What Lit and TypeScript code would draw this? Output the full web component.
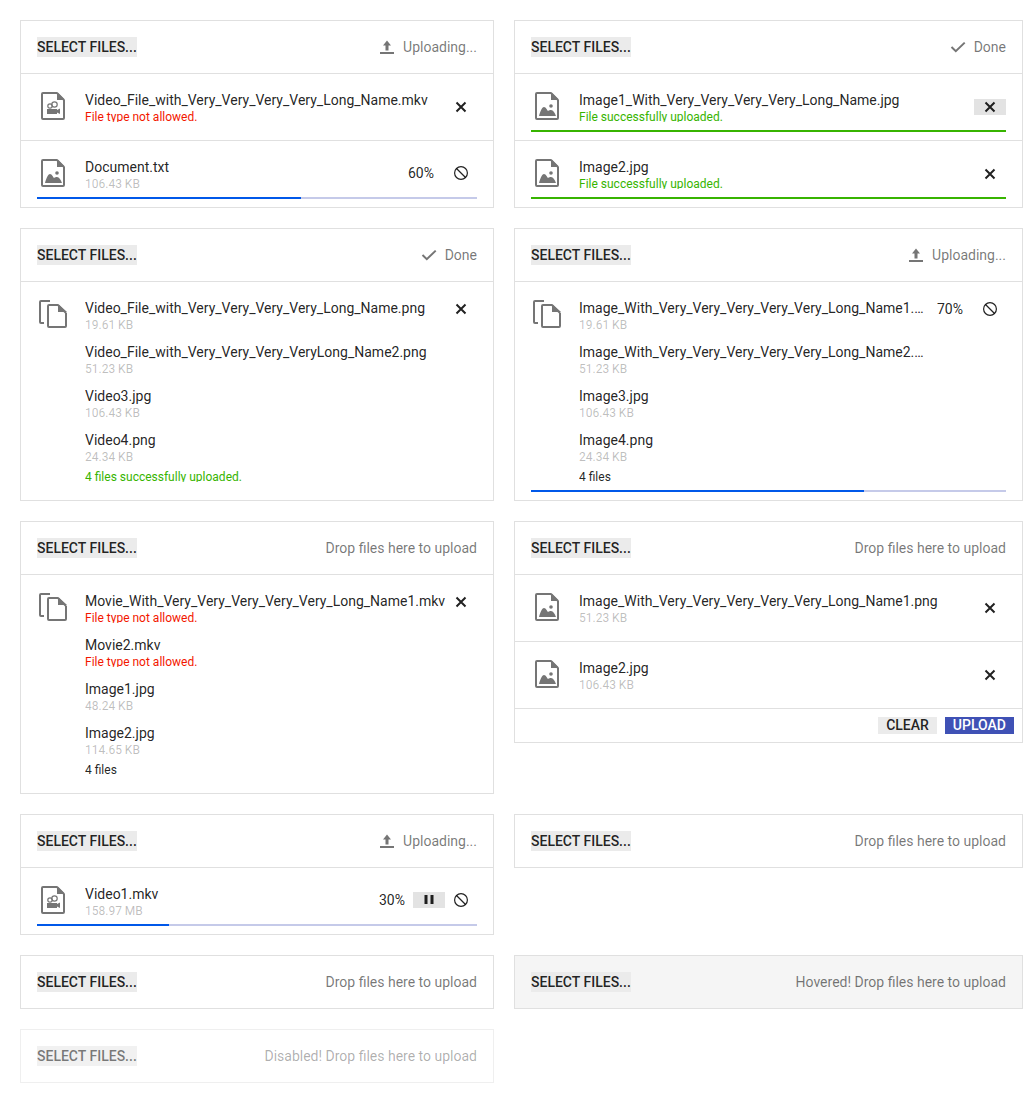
import { LitElement, html, css, svg } from "lit";
import { customElement, property } from "lit/decorators.js";

type Kind = "image" | "video" | "multi";

const fold = svg`<path d="M20 2 V10 H28 Z" fill="currentColor" stroke="none"/>`;
const docIcon = (inner: unknown) => html`<svg class="file-icon" viewBox="0 0 32 32" width="32" height="32" fill="none" stroke="currentColor" stroke-width="2">
  <path d="M20 3 H6 a1 1 0 0 0 -1 1 V28 a1 1 0 0 0 1 1 H26 a1 1 0 0 0 1 -1 V10"/>
  <path d="M20 3 L27 10"/>${fold}${inner}
</svg>`;
const imageInner = svg`<circle cx="20" cy="16" r="1.8" fill="currentColor" stroke="none"/>
  <path d="M8 26 C9 22 11 17 13 17 C15 17 16 20 17 21 C18 20 19 20 20 20 C22 20 24 23 25 26 Z" fill="currentColor" stroke="none"/>`;
const videoInner = svg`<circle cx="13" cy="16" r="2.2" stroke-width="1.2"/>
  <circle cx="17.5" cy="14.5" r="2.7" stroke-width="1.2"/>
  <path d="M10 19 H20 V20 L23 18.5 V24 L20 22.5 V24 H10 Z" fill="currentColor" stroke="none"/>`;
const multiIcon = html`<svg class="file-icon" viewBox="0 0 32 32" width="32" height="32" fill="none" stroke="currentColor" stroke-width="2">
  <path d="M13 3 H4 a1 1 0 0 0 -1 1 V24 a1 1 0 0 0 1 1 H7"/>
  <path d="M21 7 H12 a1 1 0 0 0 -1 1 V28 a1 1 0 0 0 1 1 H28 a1 1 0 0 0 1 -1 V15"/>
  <path d="M21 7 L29 15"/><path d="M21 6 V14 H30 Z" fill="currentColor" stroke="none"/>
</svg>`;
const fileIcon = (k: Kind) => (k === "multi" ? multiIcon : docIcon(k === "video" ? videoInner : imageInner));

const uploadIcon = html`<svg viewBox="0 0 16 16" width="16" height="16" fill="currentColor"><path d="M1 13 H15 V15 H1 Z"/><path d="M8 1.5 L12 6.5 H9.5 V11.5 H6.5 V6.5 H4 Z"/></svg>`;
const checkIcon = html`<svg viewBox="0 0 16 16" width="16" height="16" fill="none" stroke="currentColor" stroke-width="2"><path d="M1.5 8 L5.8 12.2 L14.7 3.6"/></svg>`;
const xIcon = html`<svg viewBox="0 0 16 16" width="16" height="16" fill="none" stroke="currentColor" stroke-width="2"><path d="M3.5 3.5 L12.5 12.5 M12.5 3.5 L3.5 12.5"/></svg>`;
const cancelIcon = html`<svg viewBox="0 0 16 16" width="16" height="16" fill="none" stroke="currentColor" stroke-width="1.2"><circle cx="8" cy="8" r="6.4"/><path d="M3.5 3.5 L12.5 12.5"/></svg>`;
const pauseIcon = html`<svg viewBox="0 0 16 16" width="16" height="16" fill="currentColor"><path d="M3.5 3 H6.5 V12 H3.5 Z M9.5 3 H12.5 V12 H9.5 Z"/></svg>`;

interface Row { name: string; size?: string; err?: string; ok?: string; }
interface Item {
  kind: Kind;
  rows: Row[];
  summary?: string;
  summaryOk?: boolean;
  pct?: number;
  bar?: "ok";
  pause?: boolean;
  action?: "x" | "xhover" | "cancel";
}
interface Card {
  status?: "up" | "done" | "drop" | "hover" | "disabled";
  items?: Item[];
  actions?: boolean;
}

const ERR = "File type not allowed.";
const OK = "File successfully uploaded.";

const cards: Card[] = [
  { status: "up", items: [
    { kind: "video", rows: [{ name: "Video_File_with_Very_Very_Very_Very_Long_Name.mkv", err: ERR }], action: "x" },
    { kind: "image", rows: [{ name: "Document.txt", size: "106.43 KB" }], pct: 60, action: "cancel" },
  ] },
  { status: "done", items: [
    { kind: "image", rows: [{ name: "Image1_With_Very_Very_Very_Very_Long_Name.jpg", ok: OK }], bar: "ok", action: "xhover" },
    { kind: "image", rows: [{ name: "Image2.jpg", ok: OK }], bar: "ok", action: "x" },
  ] },
  { status: "done", items: [
    { kind: "multi", action: "x", summary: "4 files successfully uploaded.", summaryOk: true, rows: [
      { name: "Video_File_with_Very_Very_Very_Very_Long_Name.png", size: "19.61 KB" },
      { name: "Video_File_with_Very_Very_Very_VeryLong_Name2.png", size: "51.23 KB" },
      { name: "Video3.jpg", size: "106.43 KB" },
      { name: "Video4.png", size: "24.34 KB" },
    ] },
  ] },
  { status: "up", items: [
    { kind: "multi", action: "cancel", pct: 70, summary: "4 files", rows: [
      { name: "Image_With_Very_Very_Very_Very_Very_Long_Name1.png", size: "19.61 KB" },
      { name: "Image_With_Very_Very_Very_Very_Very_Long_Name2.png", size: "51.23 KB" },
      { name: "Image3.jpg", size: "106.43 KB" },
      { name: "Image4.png", size: "24.34 KB" },
    ] },
  ] },
  { status: "drop", items: [
    { kind: "multi", action: "x", summary: "4 files", rows: [
      { name: "Movie_With_Very_Very_Very_Very_Very_Long_Name1.mkv", err: ERR },
      { name: "Movie2.mkv", err: ERR },
      { name: "Image1.jpg", size: "48.24 KB" },
      { name: "Image2.jpg", size: "114.65 KB" },
    ] },
  ] },
  { status: "drop", actions: true, items: [
    { kind: "image", rows: [{ name: "Image_With_Very_Very_Very_Very_Very_Long_Name1.png", size: "51.23 KB" }], action: "x" },
    { kind: "image", rows: [{ name: "Image2.jpg", size: "106.43 KB" }], action: "x" },
  ] },
  { status: "up", items: [
    { kind: "video", rows: [{ name: "Video1.mkv", size: "158.97 MB" }], pct: 30, pause: true, action: "cancel" },
  ] },
  { status: "drop" },
  { status: "drop" },
  { status: "hover" },
  { status: "disabled" },
];

@customElement("app-root")
export class AppRoot extends LitElement {
  @property({ type: Array }) cards = cards;

  static styles = css`
    :host {
      display: block;
      font-family: Roboto, "Liberation Sans", sans-serif;
      font-size: 14px;
      color: rgba(0, 0, 0, 0.87);
    }
    .page {
      display: grid;
      grid-template-columns: 474px 509px;
      column-gap: 20px;
      row-gap: 20px;
      padding: 20px 1px 20px 20px;
      align-items: start;
    }
    .card {
      border: 1px solid #e0e0e0;
      background: #fff;
    }
    .header {
      height: 52px;
      box-sizing: border-box;
      padding: 0 16px;
      display: flex;
      align-items: center;
      justify-content: space-between;
    }
    .card.hover .header { background: #f5f5f5; }
    .card.disabled { border-color: #efefef; }
    .card.disabled .select { color: rgba(0, 0, 0, 0.52); background: #f1f1f1; }
    .card.disabled .status { color: rgba(0, 0, 0, 0.32); }
    .select {
      font: 500 14px/20px Roboto, "Liberation Sans", sans-serif;
      background: #ebebeb;
      height: 20px;
      display: flex;
      align-items: center;
    }
    .status {
      display: flex;
      align-items: center;
      gap: 8px;
      color: rgba(0, 0, 0, 0.54);
      line-height: 20px;
    }
    .status svg { color: #757575; display: block; }
    .item {
      position: relative;
      border-top: 1px solid #e0e0e0;
      padding: 16px;
      min-height: 34px;
      display: flex;
      align-items: flex-start;
    }
    .file-icon { display: block; flex: none; color: #757575; margin-right: 16px; }
    .info {
      flex: 1;
      min-width: 0;
      padding-top: 2px;
    }
    .row + .row { margin-top: 14px; }
    .name {
      font-size: 14px;
      line-height: 17px;
      height: 17px;
      white-space: nowrap;
      overflow: hidden;
      text-overflow: ellipsis;
    }
    .sub {
      font-size: 12px;
      line-height: 16px;
      height: 13px;
      overflow: hidden;
      white-space: nowrap;
    }
    .size { color: rgba(0, 0, 0, 0.26); }
    .err { color: #f31700; }
    .ok { color: #37b400; }
    .summary {
      margin-top: 8px;
      margin-bottom: 2px;
      line-height: 14px;
      height: 12px;
    }
    .actions {
      flex: none;
      display: flex;
      align-items: center;
      margin-top: 9px;
      margin-left: -6px;
    }
    .item.progress .actions { margin-top: 8px; margin-left: 0; }
    .item.multi .actions { margin-top: 3px; }
    .pct { margin: 0 11px; line-height: 16px; }
    .pct.tight { margin-right: 8px; }
    .btn {
      width: 32px;
      height: 16px;
      display: flex;
      align-items: center;
      justify-content: center;
    }
    .btn.on { background: #e3e3e3; }
    .btn svg { display: block; }
    .track {
      position: absolute;
      left: 16px;
      right: 16px;
      bottom: 8px;
      height: 2px;
      background: #c5cae9;
    }
    .fill { height: 100%; background: #0058e9; }
    .fill.done { background: #37b400; }
    .foot {
      border-top: 1px solid #e0e0e0;
      padding: 8px;
      display: flex;
      justify-content: flex-end;
      gap: 8px;
    }
    .foot span {
      font: 500 14px/17px Roboto, "Liberation Sans", sans-serif;
      padding: 0 8px;
      height: 17px;
    }
    .clear { background: #ebebeb; }
    .upload { background: #3f51b5; color: #fff; }
  `;

  private statusView(s: Card["status"]) {
    switch (s) {
      case "up": return html`${uploadIcon}<span>Uploading...</span>`;
      case "done": return html`${checkIcon}<span>Done</span>`;
      case "hover": return html`<span>Hovered! Drop files here to upload</span>`;
      case "disabled": return html`<span>Disabled! Drop files here to upload</span>`;
      default: return html`<span>Drop files here to upload</span>`;
    }
  }

  private itemView(it: Item) {
    const cls = ["item", it.kind === "multi" ? "multi" : "", it.pct != null ? "progress" : ""].join(" ");
    return html`<div class=${cls}>
      ${fileIcon(it.kind)}
      <div class="info">
        ${it.rows.map((r) => html`<div class="row">
          <div class="name">${r.name}</div>
          ${r.err ? html`<div class="sub err">${r.err}</div>` : r.ok ? html`<div class="sub ok">${r.ok}</div>` : html`<div class="sub size">${r.size}</div>`}
        </div>`)}
        ${it.summary ? html`<div class="sub summary ${it.summaryOk ? "ok" : ""}">${it.summary}</div>` : ""}
      </div>
      <div class="actions">
        ${it.pct != null ? html`<span class="pct ${it.pause ? "tight" : ""}">${it.pct}%</span>` : ""}
        ${it.pause ? html`<span class="btn on">${pauseIcon}</span>` : ""}
        <span class="btn ${it.action === "xhover" ? "on" : ""}">${it.action === "cancel" ? cancelIcon : xIcon}</span>
      </div>
      ${it.pct != null ? html`<div class="track"><div class="fill" style="width:${it.pct}%"></div></div>` : ""}
      ${it.bar ? html`<div class="track"><div class="fill done" style="width:100%"></div></div>` : ""}
    </div>`;
  }

  render() {
    return html`<div class="page">
      ${this.cards.map((c) => html`<div class="card ${c.status === "hover" ? "hover" : ""} ${c.status === "disabled" ? "disabled" : ""}">
        <div class="header">
          <span class="select">SELECT FILES...</span>
          <span class="status">${this.statusView(c.status)}</span>
        </div>
        ${(c.items ?? []).map((it) => this.itemView(it))}
        ${c.actions ? html`<div class="foot"><span class="clear">CLEAR</span><span class="upload">UPLOAD</span></div>` : ""}
      </div>`)}
    </div>`;
  }
}
